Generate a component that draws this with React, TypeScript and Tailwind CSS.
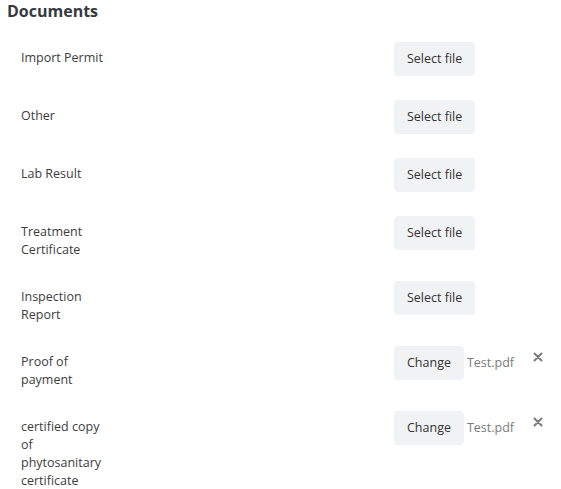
import React from "react";

type Row = { label: string; file?: string };

const rows: Row[] = [
  { label: "Import Permit" },
  { label: "Other" },
  { label: "Lab Result" },
  { label: "Treatment Certificate" },
  { label: "Inspection Report" },
  { label: "Proof of payment", file: "Test.pdf" },
  { label: "certified copy of phytosanitary certificate", file: "Test.pdf" },
];

function XIcon() {
  return (
    <svg width="10" height="10" viewBox="0 0 10 10" className="block">
      <path d="M1.5 1.5 L8.5 8.5 M8.5 1.5 L1.5 8.5" stroke="#7a7a7a" strokeWidth="2" strokeLinecap="round" />
    </svg>
  );
}

export default function App() {
  return (
    <div
      className="w-[561px] h-[489px] bg-white overflow-hidden text-[#333]"
      style={{ fontFamily: '"Open Sans", "Liberation Sans", sans-serif' }}
    >
      <h2 className="pl-[7px] text-[16px] leading-[22px] font-bold text-[#343a40]">Documents</h2>
      <div className="mt-[20px] flex flex-col gap-[24px] pl-[21px]">
        {rows.map((r) => (
          <div key={r.label} className="grid grid-cols-[373px_1fr] items-start">
            <div className="w-[90px] pt-[7px] -mb-[2px] text-[12.5px] leading-[18px] text-[#3d3d3d]">{r.label}</div>
            <div className="flex items-start">
              <button className="h-[34px] px-[13px] rounded-[4px] bg-[#f1f2f4] text-[12.5px] text-[#333]">
                {r.file ? "Change" : "Select file"}
              </button>
              {r.file && (
                <>
                  <span className="ml-[3px] mt-[8px] text-[12.5px] leading-[18px] text-[#7a7a7a]">{r.file}</span>
                  <span className="ml-[19px] mt-[6px]">
                    <XIcon />
                  </span>
                </>
              )}
            </div>
          </div>
        ))}
      </div>
    </div>
  );
}
